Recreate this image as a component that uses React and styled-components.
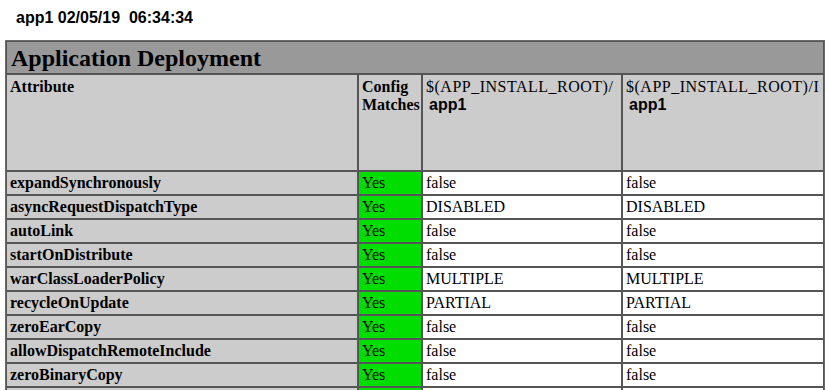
import React from "react";
import styled, { createGlobalStyle } from "styled-components";

const GlobalStyle = createGlobalStyle`
  html, body {
    margin: 0;
    padding: 0;
    background: #fff;
  }
  body {
    font-family: "Liberation Serif", "Times New Roman", serif;
    color: #000;
  }
`;

const Page = styled.div`
  padding: 8px 0 0 5px;
  width: 828px;
  height: 390px;
  overflow: hidden;
  box-sizing: border-box;
`;

const Stamp = styled.div`
  font-family: "Liberation Sans", Arial, sans-serif;
  font-weight: bold;
  font-size: 16px;
  line-height: 18px;
  padding: 1px 0 0 11px;
  margin-bottom: 13px;
  white-space: pre;
`;

const Table = styled.table`
  width: 820px;
  table-layout: fixed;
  border-collapse: separate;
  border-spacing: 0;
  border: 1px solid #6a6a6a;
  font-size: 16px;
`;

const TitleCell = styled.th`
  background: #999999;
  border: 1px solid #555;
  text-align: left;
  font-size: 24px;
  font-weight: bold;
  height: 30px;
  padding: 1px 4px 0;
`;

const HeadCell = styled.th`
  background: #cccccc;
  border: 1px solid #555;
  text-align: left;
  vertical-align: top;
  font-size: 16px;
  font-weight: ${(p) => (p.$plain ? "normal" : "bold")};
  letter-spacing: ${(p) => (p.$plain ? "0.5px" : "normal")};
  line-height: 18px;
  height: 92px;
  padding: 3px 3px 0;
  overflow: hidden;
  white-space: ${(p) => (p.$plain ? "nowrap" : "normal")};
`;

const AppName = styled.div`
  font-family: "Liberation Sans", Arial, sans-serif;
  font-weight: bold;
  font-size: 16px;
  letter-spacing: normal;
  padding-left: 3px;
`;

const Cell = styled.td`
  border: 1px solid #555;
  height: 22px;
  padding: 0 3px;
  line-height: 18px;
  white-space: nowrap;
  overflow: hidden;
  background: ${(p) =>
    p.$kind === "attr" ? "#cccccc" : p.$kind === "match" ? "#00dd00" : "#ffffff"};
  font-weight: ${(p) => (p.$kind === "attr" ? "bold" : "normal")};
`;

const rows = [
  ["expandSynchronously", "false"],
  ["asyncRequestDispatchType", "DISABLED"],
  ["autoLink", "false"],
  ["startOnDistribute", "false"],
  ["warClassLoaderPolicy", "MULTIPLE"],
  ["recycleOnUpdate", "PARTIAL"],
  ["zeroEarCopy", "false"],
  ["allowDispatchRemoteInclude", "false"],
  ["zeroBinaryCopy", "false"],
  ["autoDeployedEnabled", "false"],
];

export default function App() {
  return (
    <>
      <GlobalStyle />
      <Page>
        <Stamp>{"app1 02/05/19  06:34:34"}</Stamp>
        <Table>
          <colgroup>
            <col style={{ width: 352 }} />
            <col style={{ width: 64 }} />
            <col style={{ width: 200 }} />
            <col style={{ width: 202 }} />
          </colgroup>
          <thead>
            <tr>
              <TitleCell colSpan={4}>Application Deployment</TitleCell>
            </tr>
            <tr>
              <HeadCell>Attribute</HeadCell>
              <HeadCell>Config Matches</HeadCell>
              <HeadCell $plain>
                $(APP_INSTALL_ROOT)/
                <AppName>app1</AppName>
              </HeadCell>
              <HeadCell $plain>
                $(APP_INSTALL_ROOT)/I
                <AppName>app1</AppName>
              </HeadCell>
            </tr>
          </thead>
          <tbody>
            {rows.map(([name, value]) => (
              <tr key={name}>
                <Cell $kind="attr">{name}</Cell>
                <Cell $kind="match">Yes</Cell>
                <Cell>{value}</Cell>
                <Cell>{value}</Cell>
              </tr>
            ))}
          </tbody>
        </Table>
      </Page>
    </>
  );
}
